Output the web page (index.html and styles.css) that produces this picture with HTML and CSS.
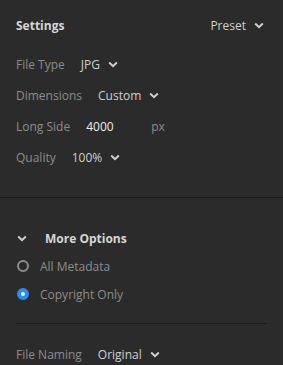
FILE: index.html
```html
<!DOCTYPE html>
<html lang="en">

<head>
    <meta charset="UTF-8">
    <title>Export Settings</title>
    <link rel="stylesheet" href="styles.css">
</head>

<body>
    <div class="panel">
        <!-- Main settings -->
        <section class="settings">
            <div class="settings-head">
                <h2>Settings</h2>
                <button class="dropdown preset">Preset
                    <svg class="chevron" viewBox="0 0 10 7"><polyline points="1.2,1.5 5,5.2 8.8,1.5" /></svg>
                </button>
            </div>
            <div class="field">
                <span class="label">File Type</span>
                <button class="dropdown">JPG
                    <svg class="chevron" viewBox="0 0 10 7"><polyline points="1.2,1.5 5,5.2 8.8,1.5" /></svg>
                </button>
            </div>
            <div class="field">
                <span class="label">Dimensions</span>
                <button class="dropdown">Custom
                    <svg class="chevron" viewBox="0 0 10 7"><polyline points="1.2,1.5 5,5.2 8.8,1.5" /></svg>
                </button>
            </div>
            <div class="field">
                <span class="label">Long Side</span>
                <span class="number">4000</span>
                <span class="unit">px</span>
            </div>
            <div class="field">
                <span class="label">Quality</span>
                <button class="dropdown">100%
                    <svg class="chevron" viewBox="0 0 10 7"><polyline points="1.2,1.5 5,5.2 8.8,1.5" /></svg>
                </button>
            </div>
        </section>

        <!-- Metadata options -->
        <section class="more">
            <div class="more-head">
                <svg class="chevron" viewBox="0 0 10 7"><polyline points="1.2,1.5 5,5.2 8.8,1.5" /></svg>
                <h3>More Options</h3>
            </div>
            <label class="radio">
                <span class="dot"></span>
                All Metadata
            </label>
            <label class="radio checked">
                <span class="dot"></span>
                Copyright Only
            </label>
            <hr class="rule">
            <div class="field">
                <span class="label">File Naming</span>
                <button class="dropdown">Original
                    <svg class="chevron" viewBox="0 0 10 7"><polyline points="1.2,1.5 5,5.2 8.8,1.5" /></svg>
                </button>
            </div>
        </section>
    </div>
</body>

</html>
```

FILE: styles.css
```css
* {
    margin: 0;
    padding: 0;
    box-sizing: border-box;
}

body {
    background-color: #2b2b2b;
    font-family: 'Open Sans', 'Liberation Sans', sans-serif;
    font-size: 12px;
    color: #d0d0d0;
}

.panel {
    width: 283px;
}

/* Settings block */
.settings {
    padding: 10px 19px 24px 16px;
    border-bottom: 1px solid #1a1a1a;
}

.settings-head {
    display: flex;
    align-items: center;
    justify-content: space-between;
    height: 30px;
    margin-bottom: 9px;
}

.settings-head h2 {
    font-size: 12px;
    font-weight: bold;
    color: #d6d6d6;
}

.field {
    display: flex;
    align-items: center;
    height: 31px;
}

.label {
    color: #8c8c8c;
    margin-right: 16px;
}

.dropdown {
    display: flex;
    align-items: center;
    background: none;
    border: none;
    font: inherit;
    color: #cfcfcf;
}

.chevron {
    width: 10px;
    height: 7px;
    margin-left: 8px;
    fill: none;
    stroke: #d0d0d0;
    stroke-width: 2;
}

.number {
    color: #ececec;
    width: 65px;
}

.unit {
    color: #8c8c8c;
}

/* More options block */
.more {
    padding: 26px 0 0 16px;
}

.more-head {
    display: flex;
    align-items: center;
    height: 28px;
}

.more-head .chevron {
    margin-left: 1px;
    margin-right: 18px;
}

.more-head h3 {
    font-size: 12px;
    font-weight: bold;
    color: #d6d6d6;
}

.radio {
    display: flex;
    align-items: center;
    height: 28px;
    color: #8c8c8c;
}

.dot {
    width: 12px;
    height: 12px;
    border-radius: 50%;
    border: 2px solid #8c8c8c;
    margin: 0 11px 0 1px;
}

.radio.checked .dot {
    border: 4px solid #2d8ceb;
    background-color: #e8f1fb;
}

.rule {
    border: none;
    border-top: 1px solid #1a1a1a;
    width: 250px;
    margin: 15px 0 15px;
}

.more .field {
    height: 30px;
}
```
